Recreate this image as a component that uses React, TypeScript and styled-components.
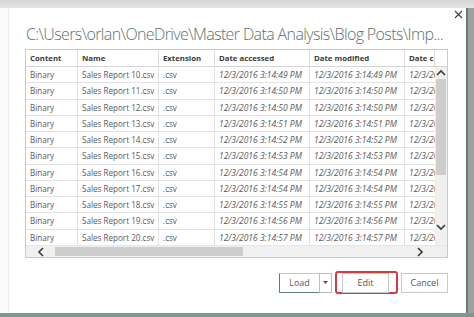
import styled, { createGlobalStyle } from 'styled-components';

const GlobalStyle = createGlobalStyle`
  html, body {
    margin: 0;
    padding: 0;
    background: #ffffff;
  }
  body {
    font-family: "Open Sans", "Noto Sans", "Liberation Sans", sans-serif;
  }
`;

const COLUMNS = '52px 81px 56px 95px 95px 1fr';

const Screen = styled.div`
  display: grid;
  grid-template-columns: minmax(0, 1fr) 8px;
  grid-template-rows: 8px 1fr 4px;
  width: 474px;
  height: 317px;
  overflow: hidden;
  background: #fbfbfb;
`;
const TopStrip = styled.div`
  grid-column: 1 / -1;
  background: linear-gradient(#d3d6d5, #e4e6e5);
`;
const RightEdge = styled.div`
  background: #9aa29f;
  border-left: 2px solid #6f7874;
`;
const BottomStrip = styled.div`
  grid-column: 1 / -1;
  background: #7d998c;
`;
const Dialog = styled.div`
  display: flex;
  flex-direction: column;
  min-width: 0;
  margin-left: 8px;
  padding: 0 18px 0 16px;
  background: #ffffff;
  border-left: 1px solid #eeeeee;
`;
const CloseRow = styled.div`
  display: flex;
  justify-content: flex-end;
  height: 12px;
  margin-right: -16px;
`;
const CloseButton = styled.div`
  display: flex;
  align-items: center;
  justify-content: center;
  width: 12px;
  height: 12px;
`;
const Title = styled.div`
  margin-top: 3px;
  margin-left: 1px;
  font-size: 16px;
  font-weight: 300;
  letter-spacing: -0.62px;
  line-height: 22px;
  color: #5e716a;
  white-space: nowrap;
  overflow: hidden;
`;
const Frame = styled.div`
  display: grid;
  grid-template-columns: minmax(0, 1fr) 12px;
  grid-template-rows: 17px 1fr 12px;
  height: 209px;
  margin-top: 4px;
  border: 1px solid #c9c9c9;
  box-sizing: border-box;
`;
const HeaderRow = styled.div`
  grid-column: 1 / -1;
  display: grid;
  grid-template-columns: ${COLUMNS} 12px;
  border-bottom: 1px solid #d6d6d6;
`;
const HeaderCell = styled.div`
  display: flex;
  align-items: center;
  padding: 0 4px;
  overflow: hidden;
  white-space: nowrap;
  font-size: 7.8px;
  font-weight: 700;
  color: #3b3b3b;
  border-right: 1px solid #dcdcdc;

  &:last-child {
    border-right: none;
  }
`;
const Body = styled.div`
  display: flex;
  flex-direction: column;
  overflow: hidden;
`;
const BodyRow = styled.div`
  display: grid;
  grid-template-columns: ${COLUMNS};
  flex: 0 0 16.25px;
  border-bottom: 1px solid #e2e2e2;
  box-sizing: border-box;
`;
const Cell = styled.div<{ $italic?: boolean }>`
  display: flex;
  align-items: center;
  padding: 0 2px 0 4px;
  overflow: hidden;
  white-space: nowrap;
  font-size: ${(p) => (p.$italic ? '8.5px' : '8.1px')};
  font-style: ${(p) => (p.$italic ? 'italic' : 'normal')};
  color: #595959;
  border-right: 1px solid #e0e0e0;

  &:last-child {
    border-right: none;
  }
`;
const VScroll = styled.div`
  display: flex;
  flex-direction: column;
  background: #f0f0f0;
`;
const ArrowBox = styled.div<{ $size: number }>`
  display: flex;
  align-items: center;
  justify-content: center;
  flex: 0 0 ${(p) => p.$size}px;
`;
const VThumb = styled.div`
  flex: 0 0 96px;
  margin: 0 1px;
  background: #cdcdcd;
`;
const Spacer = styled.div`
  flex: 1;
`;
const HScroll = styled.div`
  display: flex;
  background: #f0f0f0;
  border-top: 1px solid #e6e6e6;
`;
const HThumb = styled.div`
  flex: 0 0 188px;
  margin: 1px 0;
  background: #cdcdcd;
`;
const Corner = styled.div`
  background: #f0f0f0;
  border-top: 1px solid #e6e6e6;
`;
const ButtonRow = styled.div`
  display: flex;
  align-items: center;
  justify-content: flex-end;
  gap: 3px;
  margin-top: 13px;
`;
const SplitButton = styled.div`
  display: flex;
  height: 20px;
`;
const Button = styled.div<{ $width: number }>`
  display: flex;
  align-items: center;
  justify-content: center;
  width: ${(p) => p.$width}px;
  height: 20px;
  box-sizing: border-box;
  border: 1px solid #c8c8c8;
  background: #ffffff;
  font-size: 9px;
  color: #555555;
`;
const PrimaryButton = styled(Button)`
  border-left: 1px solid #5f8072;
  border-bottom: 1px solid #5f8072;
  border-right: none;
`;
const DropButton = styled.div`
  display: flex;
  align-items: center;
  justify-content: center;
  width: 13px;
  height: 20px;
  box-sizing: border-box;
  border: 1px solid #bdbdbd;
  background: #ffffff;
`;
const Highlight = styled.div`
  display: flex;
  align-items: center;
  height: 23px;
  padding: 0 7px 0 5px;
  box-sizing: border-box;
  border: 2px solid #d33b3f;
  border-radius: 3px;
`;

type Row = { n: number; t: string };

const rows: Row[] = [
  { n: 10, t: '49' },
  { n: 11, t: '50' },
  { n: 12, t: '50' },
  { n: 13, t: '51' },
  { n: 14, t: '52' },
  { n: 15, t: '53' },
  { n: 16, t: '54' },
  { n: 17, t: '54' },
  { n: 18, t: '55' },
  { n: 19, t: '56' },
  { n: 20, t: '57' },
];

function Chevron({ dir }: { dir: 'up' | 'down' | 'left' | 'right' }) {
  const pts = {
    up: '1,6 5,2 9,6',
    down: '1,2 5,6 9,2',
    left: '6,1 2,5 6,9',
    right: '2,1 6,5 2,9',
  }[dir];
  const vertical = dir === 'up' || dir === 'down';
  return (
    <svg width={vertical ? 10 : 8} height={vertical ? 8 : 10} viewBox={vertical ? '0 0 10 8' : '0 0 8 10'}>
      <polyline points={pts} fill="none" stroke="#3a3a3a" strokeWidth="1.6" />
    </svg>
  );
}

function App() {
  return (
    <>
      <GlobalStyle />
      <Screen>
        <TopStrip />
        <Dialog>
          <CloseRow>
            <CloseButton>
              <svg width="9" height="9" viewBox="0 0 9 9">
                <path d="M1 1L8 8M8 1L1 8" stroke="#444" strokeWidth="1.2" />
              </svg>
            </CloseButton>
          </CloseRow>
          <Title>C:\Users\orlan\OneDrive\Master Data Analysis\Blog Posts\Imp...</Title>
          <Frame>
            <HeaderRow>
              <HeaderCell>Content</HeaderCell>
              <HeaderCell>Name</HeaderCell>
              <HeaderCell>Extension</HeaderCell>
              <HeaderCell>Date accessed</HeaderCell>
              <HeaderCell>Date modified</HeaderCell>
              <HeaderCell>Date created</HeaderCell>
              <HeaderCell />
            </HeaderRow>
            <Body>
              {rows.map((r) => (
                <BodyRow key={r.n}>
                  <Cell>Binary</Cell>
                  <Cell>Sales Report {r.n}.csv</Cell>
                  <Cell>.csv</Cell>
                  <Cell $italic>12/3/2016 3:14:{r.t} PM</Cell>
                  <Cell $italic>12/3/2016 3:14:{r.t} PM</Cell>
                  <Cell $italic>12/3/2016 3:14:{r.t} PM</Cell>
                </BodyRow>
              ))}
            </Body>
            <VScroll>
              <ArrowBox $size={12}>
                <Chevron dir="up" />
              </ArrowBox>
              <VThumb />
              <Spacer />
              <ArrowBox $size={12}>
                <Chevron dir="down" />
              </ArrowBox>
              <ArrowBox $size={12} />
            </VScroll>
            <HScroll>
              <ArrowBox $size={29}>
                <Chevron dir="left" />
              </ArrowBox>
              <HThumb />
              <Spacer />
              <ArrowBox $size={30}>
                <Chevron dir="right" />
              </ArrowBox>
            </HScroll>
            <Corner />
          </Frame>
          <ButtonRow>
            <SplitButton>
              <PrimaryButton $width={40}>Load</PrimaryButton>
              <DropButton>
                <svg width="5" height="3" viewBox="0 0 5 3">
                  <path d="M0 0H5L2.5 3Z" fill="#555" />
                </svg>
              </DropButton>
            </SplitButton>
            <Highlight>
              <Button $width={47}>Edit</Button>
            </Highlight>
            <Button $width={47}>Cancel</Button>
          </ButtonRow>
        </Dialog>
        <RightEdge />
        <BottomStrip />
      </Screen>
    </>
  );
}

export default App;
